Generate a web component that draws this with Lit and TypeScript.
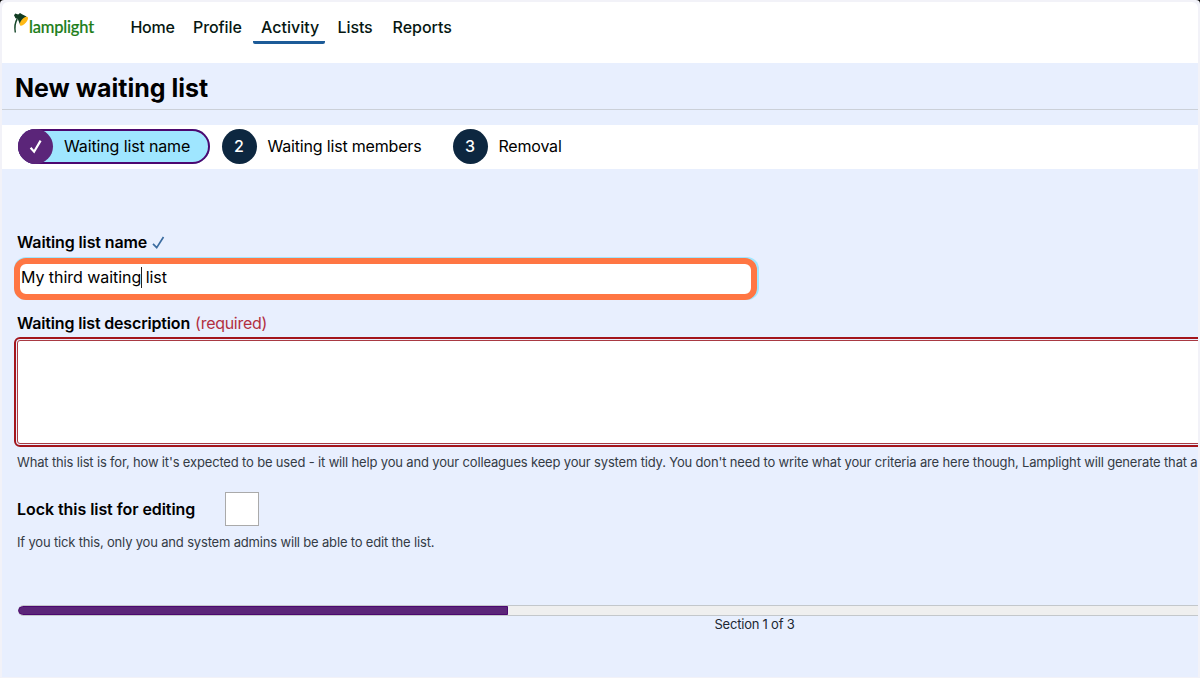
import { LitElement, html, css } from "lit";
import { customElement } from "lit/decorators.js";

@customElement("app-root")
export class AppRoot extends LitElement {
  static styles = css`
    :host { display: block; width: 1200px; height: 678px; overflow: hidden; background: #000; color: #000; font-family: Inter, "Liberation Sans", sans-serif; }
    * { box-sizing: border-box; }
    .frame { height: 678px; padding: 2px 2px 1px; background: #f2f2f8; border-radius: 4px 4px 0 0; }
    .page { height: 675px; overflow: hidden; border-radius: 6px 6px 0 0; background: #e8effe; white-space: nowrap; }
    header { height: 61px; background: #fff; display: flex; align-items: flex-start; padding-left: 11px; }
    .logo { display: flex; width: 106px; height: 42px; padding-top: 10px; flex: none; }
    .logo svg { flex: none; width: 17px; height: 22px; }
    .brand { color: #1c7d18; font: 500 16.5px/22px Lato, sans-serif; letter-spacing: -.2px; margin: 4px 0 0 -1px; -webkit-text-stroke: .2px #1c7d18; }
    nav { display: flex; }
    nav a { height: 42px; line-height: 50px; font-size: 16px; font-weight: 500; color: #061712; border-bottom: 3px solid transparent; flex: none; }
    nav a.home { width: 64.5px; padding-left: 11.5px; letter-spacing: -.3px; }
    nav a.profile { width: 67.5px; padding-left: 9.5px; letter-spacing: -.1px; }
    nav a.activity { width: 72px; margin-left: 2px; padding-left: 8px; border-color: #1c5b98; border-radius: 2px; }
    nav a.lists { padding-left: 12.5px; width: 67.5px; letter-spacing: -.1px; }
    .title { height: 47px; border-bottom: 1px solid #cbd0d8; }
    h1 { margin: 0; padding-left: 13px; font-size: 25px; line-height: 50px; font-weight: 700; letter-spacing: 0; }
    .steps { margin-top: 15px; height: 44px; background: #fff; display: flex; align-items: flex-start; padding: 4px 0 0 16px; font-size: 16px; line-height: 35px; }
    .step { display: flex; height: 35px; }
    .step.one { width: 191.5px; margin-right: 12px; background: #9fe6ff; border-radius: 18px; box-shadow: inset 0 0 0 2px #4c0870; }
    .dot { width: 35px; height: 35px; margin-right: 11px; border-radius: 50%; background: #0d2740; color: #fff; text-align: center; font-weight: 500; flex: none; }
    .one .dot { background: #5b2579; }
    .s1 { letter-spacing: -.13px; }
    .s2 { letter-spacing: -.18px; }
    .s3 { letter-spacing: -.2px; }
    .step.two { width: 231px; }
    .dot svg { display: block; margin: 10px auto 0; }
    main { padding: 63px 0 0 12px; }
    .label { display: flex; height: 20px; padding-left: 3px; font-size: 16px; line-height: 20px; font-weight: 600; }
    .label svg { margin: 3px 0 0 5px; }
    .l1 { letter-spacing: -.12px; }
    .l2 { letter-spacing: -.16px; }
    .field { width: 745px; height: 43px; margin-top: 5px; background: #9fe6ff; border-radius: 12px; padding-top: 1px; }
    .ring { width: 743px; height: 42px; border: 6px solid #ff7643; border-radius: 12px; background: #fff; font-size: 16px; line-height: 27px; padding-left: 1px; letter-spacing: -.05px; white-space: pre; }
    .caret { display: inline-block; width: 1px; height: 21px; background: #222; vertical-align: -5px; margin: 0 -1px 0 0; }
    .desc { margin-top: 13px; }
    .req { margin-left: 5px; color: #b22f40; font-weight: 400; letter-spacing: -.28px; }
    .area { width: 1300px; height: 110px; margin-top: 4px; border: 2px solid #a3151c; border-radius: 6px; padding: 1px; }
    .inner { height: 104px; border: 1px solid #a93a43; border-radius: 3px; background: #fff; }
    .hint { padding-left: 3px; color: #343b45; font-size: 13px; line-height: 18px; letter-spacing: -.175px; }
    .first { margin-top: 6px; letter-spacing: -.164px; }
    .lock { display: flex; height: 35px; margin-top: 20px; line-height: 36px; padding-left: 3px; font-size: 16px; font-weight: 600; letter-spacing: -.06px; }
    .lock span { width: 208px; }
    .box { width: 34px; height: 34px; margin-top: .5px; background: #fff; border: 1px solid #aaa; }
    .second { margin-top: 7px; }
    .bar { margin: 54px 0 0 4px; width: 1300px; height: 11px; border: 1px solid #c3c7cb; border-left: 0; border-radius: 6px 0 0 6px; background: #efefef; overflow: hidden; }
    .fill { width: 490px; height: 9px; background: #5b2579; border: 1px solid #4b0870; border-radius: 5px 0 0 5px; }
    .count { margin-left: 700.5px; font-size: 13px; line-height: 17px; color: #202732; letter-spacing: -.22px; }
  `;
  render() {
    return html`<div class="frame"><div class="page">
      <header>
        <div class="logo">
          <svg viewBox="0 0 17 22"><path d="M2.3 20.5C1.3 14.5 2 10.5 4.2 7" fill="none" stroke="#17482a" stroke-width="1.5"/><path d="M1 3.2 2.3 1.6 5.2 2.4 7 1l2 1.2 4.5 2.2-6.5 8L4.8 7 2.5 6.2Z" fill="#123c23"/><ellipse cx="10.9" cy="9.2" rx="5.6" ry="2.5" transform="rotate(-49 10.9 9.2)" fill="#ffb914"/></svg>
          <span class="brand">lamplight</span>
        </div>
        <nav><a class="home">Home</a><a class="profile">Profile</a><a class="activity">Activity</a><a class="lists">Lists</a><a class="reports">Reports</a></nav>
      </header>
      <div class="title"><h1>New waiting list</h1></div>
      <div class="steps">
        <div class="step one"><span class="dot"><svg width="15" height="16" viewBox="0 0 15 16"><path d="m2.6 8.7 3.5 4L12.6 1.6" fill="none" stroke="#fff" stroke-width="2.2"/></svg></span><span class="s1">Waiting list name</span></div>
        <div class="step two"><span class="dot">2</span><span class="s2">Waiting list members</span></div>
        <div class="step three"><span class="dot">3</span><span class="s3">Removal</span></div>
      </div>
      <main>
        <div class="label"><span class="l1">Waiting list name</span><svg width="13" height="15" viewBox="0 0 13 15"><path d="m1 8.8 3.7 3.8L11.5 2" fill="none" stroke="#3b6ca0" stroke-width="1.7"/></svg></div>
        <div class="field"><div class="ring"><span>My third waiting</span><i class="caret"></i><span> list</span></div></div>
        <div class="label desc"><span class="l2">Waiting list description</span><span class="req">(required)</span></div>
        <div class="area"><div class="inner"></div></div>
        <div class="hint first">What this list is for, how it's expected to be used - it will help you and your colleagues keep your system tidy. You don't need to write what your criteria are here though, Lamplight will generate that a</div>
        <div class="lock"><span>Lock this list for editing</span><div class="box"></div></div>
        <div class="hint second">If you tick this, only you and system admins will be able to edit the list.</div>
        <div class="bar"><div class="fill"></div></div>
        <div class="count">Section 1 of 3</div>
      </main>
    </div></div>`;
  }
}
